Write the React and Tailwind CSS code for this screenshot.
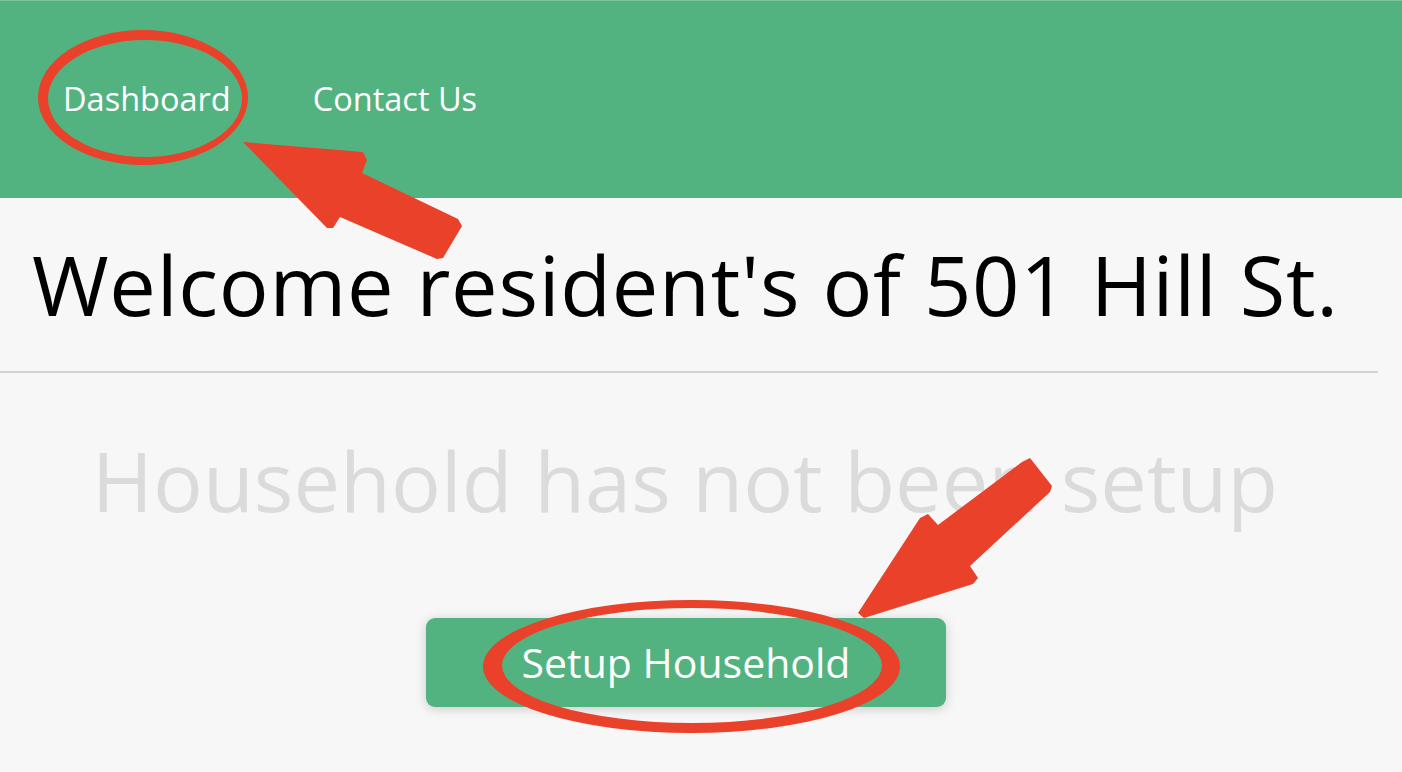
import React from "react";

const font = { fontFamily: '"Open Sans", "Noto Sans", sans-serif' };

function Annotations() {
  return (
    <svg
      className="pointer-events-none absolute left-0 top-0"
      width="1402"
      height="772"
      viewBox="0 0 1402 772"
    >
      {/* ellipse around Dashboard */}
      <path
        fillRule="evenodd"
        fill="#e9412a"
        d="M38 97.5a105 67.5 0 1 0 210 0a105 67.5 0 1 0 -210 0Z M48 98.5a97 58.5 0 1 0 194 0a97 58.5 0 1 0 -194 0Z"
      />
      {/* arrow to Dashboard */}
      <polygon
        fill="#e9412a"
        points="243,142 363,152 367,160 362,173 458,219 462,226 443,258 437,259 340,217 333,228 327,228"
      />
      {/* ellipse around Setup Household */}
      <path
        fillRule="evenodd"
        fill="#e9412a"
        d="M483 666.5a208.5 66.5 0 1 0 417 0a208.5 66.5 0 1 0 -417 0Z M502 665.5a190 57.5 0 1 0 380 0a190 57.5 0 1 0 -380 0Z"
      />
      {/* arrow to Setup Household */}
      <polygon
        fill="#e9412a"
        points="1022,462 1030,458 1052,486 1050,492 970,566 978,578 973,584 864,618 858,613 920,518 928,514 938,525"
      />
    </svg>
  );
}

export default function App() {
  return (
    <div
      className="relative h-[772px] w-full overflow-hidden bg-[#f7f7f7]"
      style={font}
    >
      <header className="flex h-[198px] items-center border-t border-[#7cc49e] bg-[#53b380] pl-[63px]">
        <nav className="flex items-center gap-[82px] text-[32.5px] leading-none text-white">
          <a href="#" className="block">Dashboard</a>
          <a href="#" className="block">Contact Us</a>
        </nav>
      </header>

      <main className="w-[1378px]">
        <h1 className="mt-[44px] pl-[32px] text-[83px] leading-none tracking-[0.7px] text-black">
          Welcome resident's of 501 Hill St.
        </h1>
        <div className="mt-[46px] h-[2px] w-full bg-[#d2d2d2]" />
        <p className="mt-[65px] pr-[8px] text-center text-[83px] leading-none text-[#dbdbdb]">
          Household has not been setup
        </p>
        <div className="mt-[97px] flex justify-center pr-[6px]">
          <button className="flex h-[89px] w-[520px] items-center justify-center rounded-[9px] bg-[#53b380] text-[41px] leading-none text-white shadow-[0_2px_12px_rgba(0,0,0,0.18)]">
            Setup Household
          </button>
        </div>
      </main>

      <Annotations />
    </div>
  );
}
